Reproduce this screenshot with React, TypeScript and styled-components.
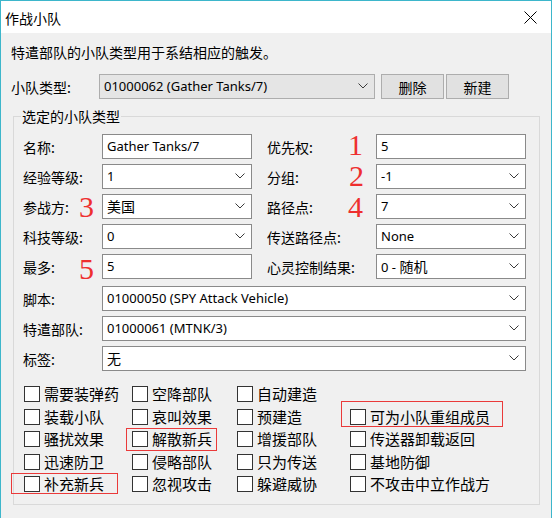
import React from 'react';
import styled, { createGlobalStyle } from 'styled-components';

const GlobalStyle = createGlobalStyle`
  html, body { margin: 0; padding: 0; background: #ffffff; }
  body { font-family: "Noto Sans CJK SC", "Noto Sans", sans-serif; color: #000; }
  * { box-sizing: border-box; }
`;

const Window = styled.div`
  width: 552px;
  height: 518px;
  overflow: hidden;
  border: 1px solid #3db6cb;
  border-bottom: none;
  background: #f0f0f0;
  display: flex;
  flex-direction: column;
`;

const TitleBar = styled.div`
  height: 32px;
  flex: none;
  background: #ffffff;
  display: flex;
  align-items: center;
  justify-content: space-between;
  padding: 0 14px 0 4px;
`;

const Title = styled.span`
  font-size: 14px;
  line-height: 20px;
  margin-top: 1px;
`;

const Body = styled.div`
  flex: 1;
  padding: 9px 12px 0 10px;
  display: flex;
  flex-direction: column;
`;

const Description = styled.div`
  font-size: 14px;
  line-height: 20px;
  white-space: nowrap;
`;

const TopRow = styled.div`
  display: flex;
  align-items: center;
  height: 25px;
  margin-top: 12px;
`;

const TopLabel = styled.span`
  width: 88px;
  font-size: 14px;
  line-height: 20px;
`;

const Button = styled.button`
  width: 63px;
  height: 25px;
  margin-left: ${(p: { $gap: number }) => p.$gap}px;
  background: #e1e1e1;
  border: 1px solid #adadad;
  font-family: "Noto Sans CJK SC", sans-serif;
  font-size: 14px;
  line-height: 20px;
  color: #000;
  padding: 0;
`;

const Group = styled.fieldset`
  margin: 8px 0 0 2px;
  width: 527px;
  border: 1px solid #d9d9d9;
  padding: 9px 12px 8px 8px;
  min-width: 0;
`;

const Legend = styled.legend`
  font-size: 14px;
  line-height: 18px;
  padding: 0 1px;
  margin-left: -1px;
`;

const Rows = styled.div`
  display: flex;
  flex-direction: column;
`;

const FieldRow = styled.div<{ $wide?: boolean; $top: number }>`
  display: grid;
  grid-template-columns: ${(p) => (p.$wide ? '80px 424px' : '80px 150px 14px 110px 150px')};
  height: 25px;
  margin-top: ${(p) => p.$top}px;
`;

const Label = styled.div`
  position: relative;
  display: flex;
  align-items: center;
  padding-left: 1px;
  font-size: 14px;
  line-height: 20px;
  white-space: nowrap;
`;

const Mark = styled.span<{ $left: number; $top: number }>`
  position: absolute;
  left: ${(p) => p.$left}px;
  top: ${(p) => p.$top}px;
  font-family: "Liberation Serif", serif;
  font-size: 30px;
  line-height: 1;
  color: #ee2f2f;
`;

const Box = styled.div<{ $grey?: boolean }>`
  height: 25px;
  border: 1px solid ${(p) => (p.$grey ? '#adadad' : '#8a8a8a')};
  background: ${(p) => (p.$grey ? '#e5e5e5' : '#ffffff')};
  display: flex;
  align-items: center;
  justify-content: space-between;
  padding: 0 6px 1px 4px;
  font-family: "Noto Sans", "Noto Sans CJK SC", sans-serif;
  font-size: 13px;
  line-height: 20px;
  white-space: nowrap;
  overflow: hidden;
`;

const Han = styled.span`
  font-family: "Noto Sans CJK SC", sans-serif;
  font-size: 14px;
`;

const Chevron = () => (
  <svg width="10" height="6" viewBox="0 0 10 6" style={{ flex: 'none' }}>
    <polyline points="0.5,0.5 5,5 9.5,0.5" fill="none" stroke="#3a3a3a" strokeWidth="1" />
  </svg>
);

const Checks = styled.div`
  display: grid;
  grid-template-columns: 108px 105px 113px 1fr;
  grid-auto-rows: 22.5px;
  margin-top: 12px;
  padding-left: 2px;
`;

const CheckItem = styled.div`
  position: relative;
  display: flex;
  align-items: center;
  gap: 4px;
  font-size: 15px;
  line-height: 20px;
  white-space: nowrap;
`;

const CheckBox = styled.span`
  width: 16px;
  height: 16px;
  flex: none;
  border: 1px solid #333333;
  background: #ffffff;
`;

const Highlight = styled.span<{ $l: number; $t: number; $w: number; $h: number }>`
  position: absolute;
  left: ${(p) => p.$l}px;
  top: ${(p) => p.$t}px;
  width: ${(p) => p.$w}px;
  height: ${(p) => p.$h}px;
  border: 1px solid #ea3a3a;
  pointer-events: none;
`;

type Hl = { l: number; t: number; w: number; h: number };
type Check = { text: string; hl?: Hl } | null;

const checks: Check[] = [
  { text: '需要装弹药' }, { text: '空降部队' }, { text: '自动建造' }, null,
  { text: '装载小队' }, { text: '哀叫效果' }, { text: '预建造' }, { text: '可为小队重组成员', hl: { l: -9, t: -5, w: 162, h: 26 } },
  { text: '骚扰效果' }, { text: '解散新兵', hl: { l: -6, t: -0.5, w: 91, h: 23 } }, { text: '增援部队' }, { text: '传送器卸载返回' },
  { text: '迅速防卫' }, { text: '侵略部队' }, { text: '只为传送' }, { text: '基地防御' },
  { text: '补充新兵', hl: { l: -13, t: 0, w: 107, h: 21 } }, { text: '忽视攻击' }, { text: '躲避威协' }, { text: '不攻击中立作战方' },
];

export default function App() {
  return (
    <>
      <GlobalStyle />
      <Window>
        <TitleBar>
          <Title>作战小队</Title>
          <svg width="13" height="13" viewBox="0 0 13 13">
            <path d="M0.5 0.5 L12.5 12.5 M12.5 0.5 L0.5 12.5" stroke="#000" strokeWidth="1" />
          </svg>
        </TitleBar>
        <Body>
          <Description>特遣部队的小队类型用于系结相应的触发。</Description>
          <TopRow>
            <TopLabel>小队类型:</TopLabel>
            <Box $grey style={{ width: 276 }}>
              <span>01000062 (Gather Tanks/7)</span>
              <Chevron />
            </Box>
            <Button $gap={6}>删除</Button>
            <Button $gap={2}>新建</Button>
          </TopRow>
          <Group>
            <Legend>选定的小队类型</Legend>
            <Rows>
              <FieldRow $top={0}>
                <Label>名称:</Label>
                <Box><span>Gather Tanks/7</span></Box>
                <span />
                <Label>优先权:<Mark $left={82} $top={-4}>1</Mark></Label>
                <Box><span>5</span></Box>
              </FieldRow>
              <FieldRow $top={5}>
                <Label>经验等级:</Label>
                <Box><span>1</span><Chevron /></Box>
                <span />
                <Label>分组:<Mark $left={83} $top={-3}>2</Mark></Label>
                <Box><span>-1</span><Chevron /></Box>
              </FieldRow>
              <FieldRow $top={5}>
                <Label>参战方:<Mark $left={57} $top={-2}>3</Mark></Label>
                <Box><Han>美国</Han><Chevron /></Box>
                <span />
                <Label>路径点:<Mark $left={82} $top={-2}>4</Mark></Label>
                <Box><span>7</span><Chevron /></Box>
              </FieldRow>
              <FieldRow $top={5}>
                <Label>科技等级:</Label>
                <Box><span>0</span><Chevron /></Box>
                <span />
                <Label>传送路径点:</Label>
                <Box><span>None</span><Chevron /></Box>
              </FieldRow>
              <FieldRow $top={5}>
                <Label>最多:<Mark $left={57} $top={0}>5</Mark></Label>
                <Box><span>5</span></Box>
                <span />
                <Label>心灵控制结果:</Label>
                <Box><span>0 - <Han>随机</Han></span><Chevron /></Box>
              </FieldRow>
              <FieldRow $wide $top={7}>
                <Label>脚本:</Label>
                <Box><span>01000050 (SPY Attack Vehicle)</span><Chevron /></Box>
              </FieldRow>
              <FieldRow $wide $top={5}>
                <Label>特遣部队:</Label>
                <Box><span>01000061 (MTNK/3)</span><Chevron /></Box>
              </FieldRow>
              <FieldRow $wide $top={5}>
                <Label>标签:</Label>
                <Box><Han>无</Han><Chevron /></Box>
              </FieldRow>
            </Rows>
            <Checks>
              {checks.map((c, i) =>
                c ? (
                  <CheckItem key={i}>
                    <CheckBox />
                    <span>{c.text}</span>
                    {c.hl && <Highlight $l={c.hl.l} $t={c.hl.t} $w={c.hl.w} $h={c.hl.h} />}
                  </CheckItem>
                ) : (
                  <span key={i} />
                )
              )}
            </Checks>
          </Group>
        </Body>
      </Window>
    </>
  );
}
